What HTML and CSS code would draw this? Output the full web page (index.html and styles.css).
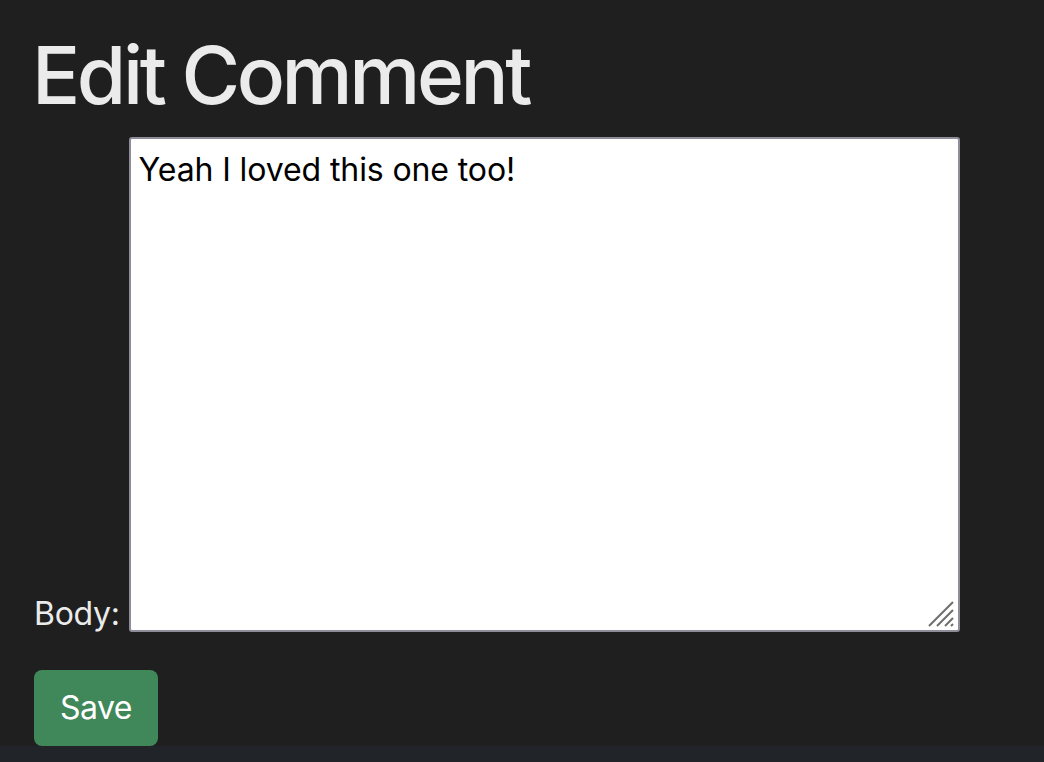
FILE: index.html
```html
<!DOCTYPE html>
<html lang="en">
<head>
<meta charset="utf-8">
<title>Edit Comment</title>
<link rel="stylesheet" href="styles.css">
</head>
<body>
<main class="page">
  <h1 class="title">Edit Comment</h1>
  <form class="form">
    <div class="field">
      <label class="label" for="body">Body:</label>
      <span class="area-wrap">
        <textarea id="body" class="area">Yeah I loved this one too!</textarea>
        <svg class="grip" width="26" height="26" viewBox="0 0 26 26" aria-hidden="true">
          <path d="M1 25 L25 1 M9 25 L25 9 M17 25 L25 17 M23 25 L25 23" stroke="#6e6e6e" stroke-width="2" fill="none"/>
        </svg>
      </span>
    </div>
    <button type="button" class="btn">Save</button>
  </form>
</main>
</body>
</html>
```
FILE: styles.css
```css
html, body {
  margin: 0;
  padding: 0;
  background: #212429;
}
.page {
  height: 746px;
  box-sizing: border-box;
  background: #1f1f1f;
  padding: 27px 32px 0 32px;
  font-family: Inter, "Noto Sans", sans-serif;
  color: #ebebeb;
}
.title {
  margin: 0;
  font-size: 80px;
  line-height: 96px;
  font-weight: 500;
  letter-spacing: -3.4px;
  color: #ebebeb;
}
.form {
  margin-top: 14px;
  display: flex;
  flex-direction: column;
  align-items: flex-start;
}
.field {
  display: flex;
  align-items: flex-end;
  gap: 9px;
}
.label {
  font-size: 32px;
  line-height: 32px;
  margin-bottom: 2px;
  margin-left: 2px;
  letter-spacing: -0.3px;
  color: #ebebeb;
}
.area-wrap {
  position: relative;
  display: block;
}
.area {
  display: block;
  box-sizing: border-box;
  width: 831px;
  height: 495px;
  margin: 0;
  padding: 7px 8px;
  border: 2px solid #8e8d99;
  border-radius: 3px;
  background: #ffffff;
  color: #000000;
  font-family: Inter, "Noto Sans", sans-serif;
  font-size: 32px;
  line-height: 48px;
  letter-spacing: -0.1px;
  resize: none;
  outline: none;
}
.grip {
  position: absolute;
  right: 6px;
  bottom: 5px;
}
.btn {
  margin-top: 38px;
  margin-left: 2px;
  box-sizing: border-box;
  width: 124px;
  height: 76px;
  padding: 0;
  border: none;
  border-radius: 8px;
  background: #40875a;
  color: #ffffff;
  font-family: Inter, "Noto Sans", sans-serif;
  font-size: 32px;
  line-height: 48px;
  font-weight: 400;
  letter-spacing: -0.5px;
}
```
